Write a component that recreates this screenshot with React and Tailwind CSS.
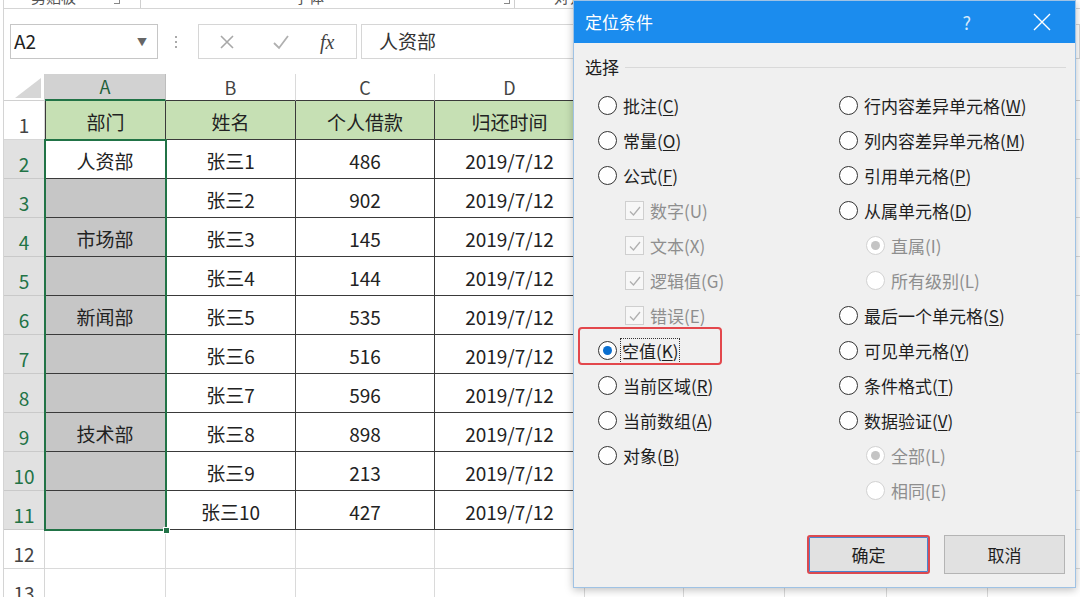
import React from "react";

// sheet data, row 1 is the header row
const rows = [
  ["部门", "姓名", "个人借款", "归还时间"],
  ["人资部", "张三1", "486", "2019/7/12"],
  ["", "张三2", "902", "2019/7/12"],
  ["市场部", "张三3", "145", "2019/7/12"],
  ["", "张三4", "144", "2019/7/12"],
  ["新闻部", "张三5", "535", "2019/7/12"],
  ["", "张三6", "516", "2019/7/12"],
  ["", "张三7", "596", "2019/7/12"],
  ["技术部", "张三8", "898", "2019/7/12"],
  ["", "张三9", "213", "2019/7/12"],
  ["", "张三10", "427", "2019/7/12"],
];

const colLetters = ["A", "B", "C", "D", "E", "F", "G", "H", "I"];

const leftOptions = [
  { type: "radio", label: "批注", k: "C" },
  { type: "radio", label: "常量", k: "O" },
  { type: "radio", label: "公式", k: "F" },
  { type: "check", label: "数字", k: "U", sub: true, disabled: true },
  { type: "check", label: "文本", k: "X", sub: true, disabled: true },
  { type: "check", label: "逻辑值", k: "G", sub: true, disabled: true },
  { type: "check", label: "错误", k: "E", sub: true, disabled: true },
  { type: "radio", label: "空值", k: "K", checked: true, focus: true },
  { type: "radio", label: "当前区域", k: "R" },
  { type: "radio", label: "当前数组", k: "A" },
  { type: "radio", label: "对象", k: "B" },
];

const rightOptions = [
  { type: "radio", label: "行内容差异单元格", k: "W" },
  { type: "radio", label: "列内容差异单元格", k: "M" },
  { type: "radio", label: "引用单元格", k: "P" },
  { type: "radio", label: "从属单元格", k: "D" },
  { type: "radio", label: "直属", k: "I", sub: true, disabled: true, checked: true },
  { type: "radio", label: "所有级别", k: "L", sub: true, disabled: true },
  { type: "radio", label: "最后一个单元格", k: "S" },
  { type: "radio", label: "可见单元格", k: "Y" },
  { type: "radio", label: "条件格式", k: "T" },
  { type: "radio", label: "数据验证", k: "V" },
  { type: "radio", label: "全部", k: "L", sub: true, disabled: true, checked: true },
  { type: "radio", label: "相同", k: "E", sub: true, disabled: true },
];

function Radio({ checked, disabled }) {
  return (
    <span
      className={`flex h-[19px] w-[19px] shrink-0 items-center justify-center rounded-full border bg-white ${
        disabled ? "border-[#d2d2d2]" : "border-[#333]"
      }`}
    >
      {checked && (
        <span
          className={`h-[9px] w-[9px] rounded-full ${disabled ? "bg-[#c4c4c4]" : "bg-[#0a6fd0]"}`}
        />
      )}
    </span>
  );
}

function Check() {
  return (
    <span className="flex h-[19px] w-[19px] shrink-0 items-center justify-center border border-[#cfcfcf] bg-[#f7f7f7]">
      <svg width="14" height="14" viewBox="0 0 14 14" fill="none">
        <polyline points="2,7.5 5.5,11 12,3" stroke="#b0b0b0" strokeWidth="1.3" />
      </svg>
    </span>
  );
}

function Option({ o }) {
  const text = o.disabled ? (
    <span className="text-[#8e8e8e]">
      {o.label}({o.k})
    </span>
  ) : (
    <span className="text-[#1e1e1e]">
      {o.label}(<u className="underline-offset-2">{o.k}</u>)
    </span>
  );
  return (
    <div className={`flex h-[35px] items-center gap-[6px] ${o.sub ? "pl-[27px]" : ""}`}>
      {o.type === "radio" ? <Radio checked={o.checked} disabled={o.disabled} /> : <Check />}
      {o.focus ? (
        <span className="-ml-[2px] px-[1px] leading-[24px] outline-1 outline-dotted outline-[#333]">{text}</span>
      ) : (
        text
      )}
    </div>
  );
}

function Dialog() {
  return (
    <div className="absolute left-[573px] top-0 flex h-[588px] w-[503px] flex-col border border-[#9fc2e4] bg-[#f0f0f0] text-[17px] shadow-[0_2px_8px_rgba(0,0,0,0.25)]">
      <div className="flex h-[42px] shrink-0 items-center bg-[#1b8cee] pl-[11px] text-white">
        <span className="flex-1">定位条件</span>
        <span className="mr-[62px] text-[18px] text-[#d5e9fb]">?</span>
        <svg className="mr-[24px]" width="18" height="18" viewBox="0 0 18 18">
          <path d="M1 1 L17 17 M17 1 L1 17" stroke="#fff" strokeWidth="1.4" />
        </svg>
      </div>

      <div className="mt-[13px] flex h-[22px] items-center pl-[11px] pr-[9px]">
        <span className="text-[#1e1e1e]">选择</span>
        <span className="ml-[6px] h-px flex-1 bg-[#d9d9d9]" />
      </div>

      <div className="mt-[10px] grid grid-cols-[265px_1fr]">
        <div className="flex flex-col pl-[24px]">
          {leftOptions.map((o) => (
            <Option key={o.label} o={o} />
          ))}
        </div>
        <div className="flex flex-col">
          {rightOptions.map((o) => (
            <Option key={o.label} o={o} />
          ))}
        </div>
      </div>

      <div className="mt-[27px] flex justify-end gap-[14px] pr-[10px]">
        <button className="h-[39px] w-[123px] rounded-[3px] border-2 border-[#dc4a50] bg-[#e1e1e1] text-[#1e1e1e] shadow-[inset_0_0_0_1px_#4a86cf]">
          确定
        </button>
        <button className="h-[39px] w-[121px] border border-[#b4b4b4] bg-[#e1e1e1] text-[#1e1e1e]">取消</button>
      </div>

      {/* red annotation round 空值 */}
      <div className="absolute left-[4px] top-[326px] h-[38px] w-[144px] rounded-[4px] border-2 border-[#e3474c]" />
    </div>
  );
}

function Sheet() {
  const grid =
    "grid grid-cols-[41px_121px_130px_139px_150px_99px_101px_102px_101px_102px] grid-rows-[27px_repeat(13,39px)]";
  const cells = [];

  // column header row
  cells.push(
    <div key="corner" className="relative border-b border-r border-[#d0d0d0] bg-white">
      <svg className="absolute bottom-[2px] right-[3px]" width="26" height="20" viewBox="0 0 26 20">
        <polygon points="26,0 26,20 0,20" fill="#d6d6d6" />
      </svg>
    </div>
  );
  colLetters.forEach((c, i) => {
    const selected = i === 0;
    cells.push(
      <div
        key={"h" + c}
        className={`flex items-center justify-center border-r text-[18px] ${
          selected
            ? "border-b-2 border-r-[#bdbdbd] border-b-[#217346] bg-[#d2d2d2] text-[#1f5f38]"
            : i < 4
            ? "border-b border-r-[#dadada] border-b-[#3a3a3a] bg-white text-[#444]"
            : "border-b border-[#d0d0d0] bg-white text-[#444]"
        }`}
      >
        {c}
      </div>
    );
  });

  for (let r = 0; r < 13; r++) {
    const sel = r >= 1 && r <= 10;
    cells.push(
      <div
        key={"r" + r}
        className={`flex items-end justify-center border-b border-r pb-[2px] text-[19px] leading-[24px] ${
          sel ? "border-[#c9c9c9] bg-[#e1e1e1] text-[#217346]" : "border-[#d6d6d6] bg-white text-[#444]"
        }`}
      >
        {r + 1}
      </div>
    );
    colLetters.forEach((c, ci) => {
      const data = r < rows.length && ci < 4;
      let cls = "border-b border-r border-[#dadada] bg-white";
      if (data) {
        cls = "border-b border-r border-[#3a3a3a] ";
        if (r === 0) cls += "bg-[#c6e0b4]";
        else if (ci === 0 && r > 1) cls += "bg-[#c6c6c6]";
        else cls += "bg-white";
        if (ci === 0 && r === 0) cls += " border-l border-l-[#3a3a3a]";
      }
      cells.push(
        <div
          key={c + r}
          className={`flex items-end justify-center pb-[5px] text-[19px] leading-[24px] text-[#222] ${cls}`}
        >
          {data ? rows[r][ci] : ""}
        </div>
      );
    });
  }

  return (
    <div className="relative">
      <div className={grid}>{cells}</div>
      {/* selection of A2:A11 */}
      <div className="pointer-events-none absolute left-[40px] top-[65px] h-[392px] w-[123px] border-2 border-[#217346]">
        <span className="absolute -bottom-[5px] -right-[5px] h-[7px] w-[7px] border border-white bg-[#217346]" />
      </div>
    </div>
  );
}

export default function App() {
  return (
    <div className="relative h-[597px] w-[1080px] overflow-hidden bg-white font-['Noto_Sans_CJK_SC',sans-serif]">
      <div className="ml-[3px] flex h-full flex-col border-l border-[#d4d4d4]">
        {/* ribbon group labels, cut off at the top */}
        <div className="relative h-[9px] shrink-0 overflow-hidden border-b border-[#d5d5d5] text-[15px] leading-[18px] text-[#555]">
          <span className="absolute left-[27px] -top-[12px]">剪贴板</span>
          <span className="absolute left-[110px] top-[0px] h-[4px] w-[6px] border-b border-r border-[#888]" />
          <span className="absolute left-[136px] top-0 h-full w-px bg-[#cfcfcf]" />
          <span className="absolute left-[290px] -top-[12px]">字体</span>
          <span className="absolute left-[500px] top-[0px] h-[4px] w-[6px] border-b border-r border-[#888]" />
          <span className="absolute left-[510px] top-0 h-full w-px bg-[#cfcfcf]" />
          <span className="absolute left-[550px] -top-[12px]">对齐方式</span>
        </div>

        {/* formula bar */}
        <div className="flex h-[65px] shrink-0 items-center">
          <div className="ml-[6px] flex h-[35px] w-[148px] items-center justify-between border border-[#c6c6c6] pl-[3px] pr-[10px] text-[19px] text-[#222]">
            <span>A2</span>
            <span className="text-[10px] text-[#666]">▼</span>
          </div>
          <div className="ml-[17px] flex flex-col gap-[3px]">
            <span className="h-[2px] w-[2px] bg-[#aaa]" />
            <span className="h-[2px] w-[2px] bg-[#aaa]" />
            <span className="h-[2px] w-[2px] bg-[#aaa]" />
          </div>
          <div className="ml-[21px] flex h-[35px] w-[159px] items-center border border-[#d6d6d6]">
            <svg className="ml-[20px]" width="16" height="16" viewBox="0 0 16 16">
              <path d="M2 2 L14 14 M14 2 L2 14" stroke="#a8a8a8" strokeWidth="1.6" />
            </svg>
            <svg className="ml-[37px]" width="18" height="16" viewBox="0 0 18 16">
              <path d="M2 9 L7 14 L16 2" stroke="#b0b0b0" strokeWidth="1.8" fill="none" />
            </svg>
            <span className="ml-[30px] font-['Liberation_Serif',serif] text-[20px] italic text-[#444]">fx</span>
          </div>
          <div className="ml-[4px] flex h-[35px] flex-1 items-center border border-[#d6d6d6] pl-[17px] text-[19px] text-[#333]">
            人资部
          </div>
        </div>

        <Sheet />
      </div>
      <Dialog />
    </div>
  );
}
